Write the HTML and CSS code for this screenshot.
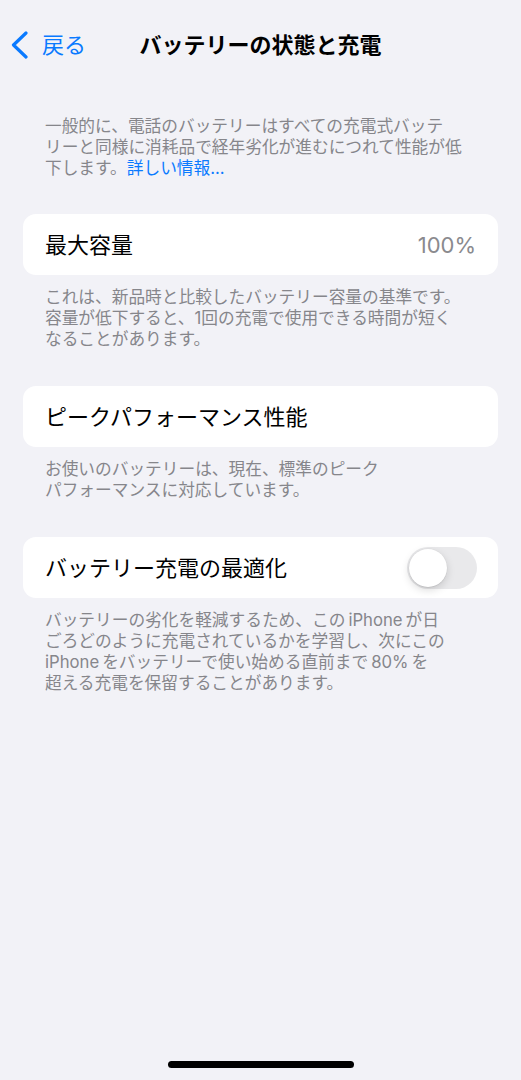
FILE: index.html
```html
<!DOCTYPE html>
<html lang="ja">
<head>
<meta charset="utf-8">
<title>バッテリーの状態と充電</title>
<link rel="stylesheet" href="styles.css">
</head>
<body>
<div class="screen">
  <header class="nav">
    <a class="back" href="#">
      <svg class="chev" width="22" height="28" viewBox="0 0 22 28"><path d="M18 2 L5.5 14 L18 26" fill="none" stroke="#0a7aff" stroke-width="3.2" stroke-linecap="round" stroke-linejoin="round"/></svg>
      <span>戻る</span>
    </a>
    <h1 class="title">バッテリーの状態と充電</h1>
    <span></span>
  </header>

  <p class="note intro">一般的に、電話のバッテリーはすべての充電式バッテ<br>リーと同様に消耗品で経年劣化が進むにつれて性能が低<br>下します。<a class="link" href="#">詳しい情報...</a></p>

  <div class="card">
    <span class="label">最大容量</span>
    <span class="value">100%</span>
  </div>
  <p class="note">これは、新品時と比較したバッテリー容量の基準です。<br>容量が低下すると、1回の充電で使用できる時間が短く<br>なることがあります。</p>

  <div class="card">
    <span class="label">ピークパフォーマンス性能</span>
  </div>
  <p class="note">お使いのバッテリーは、現在、標準のピーク<br>パフォーマンスに対応しています。</p>

  <div class="card">
    <span class="label">バッテリー充電の最適化</span>
    <span class="toggle"><span class="knob"></span></span>
  </div>
  <p class="note">バッテリーの劣化を軽減するため、この<span class="lat">iPhone</span>が日<br>ごろどのように充電されているかを学習し、次にこの<br><span class="lat first">iPhone</span>をバッテリーで使い始める直前まで<span class="lat">80%</span>を<br>超える充電を保留することがあります。</p>

  <div class="home"></div>
</div>
</body>
</html>
```
FILE: styles.css
```css
* { box-sizing: border-box; }
html, body { margin: 0; padding: 0; }
body {
  background: #f2f2f7;
  font-family: Inter, "Noto Sans CJK JP", sans-serif;
  color: #000;
}
.screen {
  display: flex;
  flex-direction: column;
  min-height: 100vh;
  padding: 0 23px;
}
.nav {
  height: 90px;
  margin: 0 -23px;
  display: grid;
  grid-template-columns: 1fr auto 1fr;
  align-items: center;
}
.back {
  display: flex;
  align-items: center;
  padding-left: 8px;
  gap: 12px;
  color: #0a7aff;
  text-decoration: none;
  font-size: 22px;
  line-height: 28px;
}
.chev { display: block; }
.title {
  margin: 0;
  font-size: 22px;
  font-weight: 700;
  line-height: 28px;
  letter-spacing: 0;
}
.note {
  margin: 12px 0 36px;
  padding: 0 22px;
  font-size: 16.7px;
  line-height: 21px;
  color: #86868b;
}
.intro {
  margin-top: 26px;
  margin-bottom: 35px;
}
.link {
  color: #0a7aff;
  text-decoration: none;
}
.lat { margin: 0 3px; }
.lat.first { margin-left: 0; }
.card {
  height: 61px;
  background: #fff;
  border-radius: 13px;
  display: flex;
  align-items: center;
  justify-content: space-between;
  padding: 0 22px;
}
.label {
  font-size: 22px;
  line-height: 28px;
}
.value {
  font-size: 22px;
  line-height: 28px;
  color: #8a8a8e;
}
.toggle {
  width: 70px;
  height: 42px;
  margin-right: -1px;
  border-radius: 21px;
  background: #e9e9eb;
  padding: 2px;
  display: flex;
}
.knob {
  width: 38px;
  height: 38px;
  border-radius: 50%;
  background: #fff;
  box-shadow: 0 3px 8px rgba(0,0,0,0.15), 0 1px 1px rgba(0,0,0,0.06), 0 0 0 0.5px rgba(0,0,0,0.04);
}
.home {
  margin: auto auto 12px;
  width: 186px;
  height: 7px;
  border-radius: 4px;
  background: #000;
}
```
